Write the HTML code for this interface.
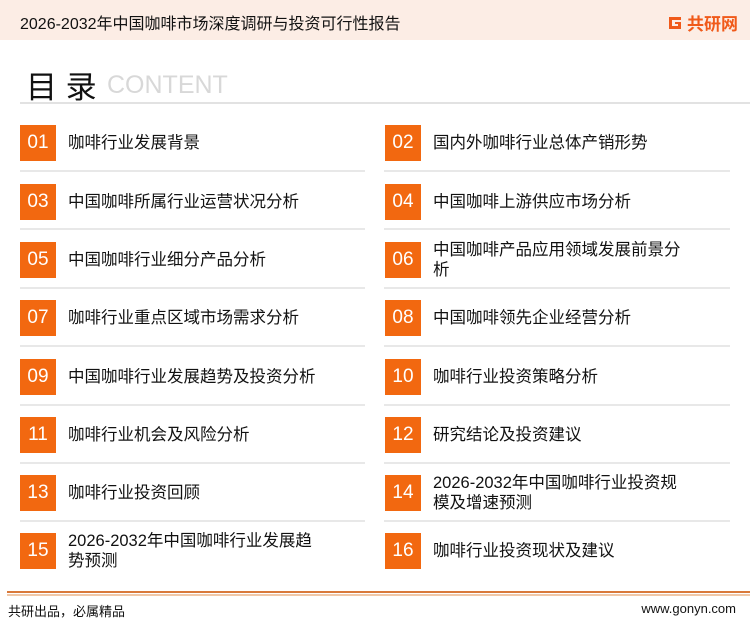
<!DOCTYPE html>
<html><head><meta charset="utf-8"><style>
*{margin:0;padding:0;box-sizing:border-box}
body{width:750px;height:622px;background:#fff;position:relative;overflow:hidden;font-family:"Liberation Sans","Noto Sans CJK SC",sans-serif;color:#111}
.hdr{position:absolute;left:0;top:0;width:750px;height:40px;background:#fcede5}
.hdr .t{position:absolute;left:20px;top:10px;font-size:16px;color:#111}
.logo{position:absolute;left:667px;top:10px;display:flex;align-items:center;gap:4px;color:#f05a1a;font-weight:bold;font-size:17px}
.title{position:absolute;left:26px;top:62px;font-size:31px;color:#111;white-space:pre}
.content{position:absolute;left:107px;top:71px;font-size:25px;color:#d8d8d8}
.hl{position:absolute;left:20px;top:102px;width:730px;height:2px;background:#e2e2e2}
.item{position:absolute;height:36px;display:flex;align-items:center}
.num{width:36px;height:36px;background:#f26810;color:#fff;font-size:19px;display:flex;align-items:center;justify-content:center;flex:none}
.txt{margin-left:12px;font-size:16.5px;line-height:20px;width:262px;color:#111}
.sep{position:absolute;height:2px;background:#e8e8e8}
.f1{position:absolute;left:7px;top:591px;width:743px;height:2px;background:#d9793a}
.f2{position:absolute;left:7px;top:594px;width:743px;height:2px;background:#f0c8a8}
.fl{position:absolute;left:8px;top:601px;font-size:13px}
.fr{position:absolute;right:14px;top:601px;font-size:13px}
</style></head><body>
<div class="hdr"><div class="t">2026-2032年中国咖啡市场深度调研与投资可行性报告</div>
<div class="logo"><svg width="16" height="16" viewBox="0 0 16 16"><path d="M2 2h12v3H5v6h6V9H8V7h6v7H2z" fill="#f05a1a"/></svg><span>共研网</span></div></div>
<div class="title">目 录</div>
<div class="content">CONTENT</div>
<div class="hl"></div>

<div class="item" style="left:20px;top:125px"><div class="num">01</div><div class="txt">咖啡行业发展背景</div></div>
<div class="item" style="left:385px;top:125px"><div class="num">02</div><div class="txt">国内外咖啡行业总体产销形势</div></div>
<div class="item" style="left:20px;top:184px"><div class="num">03</div><div class="txt">中国咖啡所属行业运营状况分析</div></div>
<div class="item" style="left:385px;top:184px"><div class="num">04</div><div class="txt">中国咖啡上游供应市场分析</div></div>
<div class="item" style="left:20px;top:242px"><div class="num">05</div><div class="txt">中国咖啡行业细分产品分析</div></div>
<div class="item" style="left:385px;top:242px"><div class="num">06</div><div class="txt">中国咖啡产品应用领域发展前景分<br>析</div></div>
<div class="item" style="left:20px;top:300px"><div class="num">07</div><div class="txt">咖啡行业重点区域市场需求分析</div></div>
<div class="item" style="left:385px;top:300px"><div class="num">08</div><div class="txt">中国咖啡领先企业经营分析</div></div>
<div class="item" style="left:20px;top:359px"><div class="num">09</div><div class="txt">中国咖啡行业发展趋势及投资分析</div></div>
<div class="item" style="left:385px;top:359px"><div class="num">10</div><div class="txt">咖啡行业投资策略分析</div></div>
<div class="item" style="left:20px;top:417px"><div class="num">11</div><div class="txt">咖啡行业机会及风险分析</div></div>
<div class="item" style="left:385px;top:417px"><div class="num">12</div><div class="txt">研究结论及投资建议</div></div>
<div class="item" style="left:20px;top:475px"><div class="num">13</div><div class="txt">咖啡行业投资回顾</div></div>
<div class="item" style="left:385px;top:475px"><div class="num">14</div><div class="txt">2026-2032年中国咖啡行业投资规<br>模及增速预测</div></div>
<div class="item" style="left:20px;top:533px"><div class="num">15</div><div class="txt">2026-2032年中国咖啡行业发展趋<br>势预测</div></div>
<div class="item" style="left:385px;top:533px"><div class="num">16</div><div class="txt">咖啡行业投资现状及建议</div></div>

<div class="sep" style="left:20px;top:170px;width:345px"></div><div class="sep" style="left:384px;top:170px;width:346px"></div>
<div class="sep" style="left:20px;top:228px;width:345px"></div><div class="sep" style="left:384px;top:228px;width:346px"></div>
<div class="sep" style="left:20px;top:287px;width:345px"></div><div class="sep" style="left:384px;top:287px;width:346px"></div>
<div class="sep" style="left:20px;top:345px;width:345px"></div><div class="sep" style="left:384px;top:345px;width:346px"></div>
<div class="sep" style="left:20px;top:404px;width:345px"></div><div class="sep" style="left:384px;top:404px;width:346px"></div>
<div class="sep" style="left:20px;top:462px;width:345px"></div><div class="sep" style="left:384px;top:462px;width:346px"></div>
<div class="sep" style="left:20px;top:520px;width:345px"></div><div class="sep" style="left:384px;top:520px;width:346px"></div>

<div class="f1"></div><div class="f2"></div>
<div class="fl">共研出品，必属精品</div>
<div class="fr">www.gonyn.com</div>
</body></html>
